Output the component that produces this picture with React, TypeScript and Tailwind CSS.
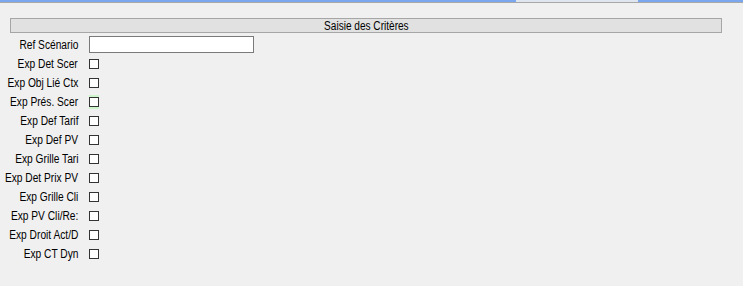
const rows = [
  "Exp Det Scer",
  "Exp Obj Lié Ctx",
  "Exp Prés. Scer",
  "Exp Def Tarif",
  "Exp Def PV",
  "Exp Grille Tari",
  "Exp Det Prix PV",
  "Exp Grille Cli",
  "Exp PV Cli/Re:",
  "Exp Droit Act/D",
  "Exp CT Dyn",
];

function Label({ text }: { text: string }) {
  return (
    <div className="w-[78px] flex justify-end whitespace-nowrap leading-none">
      <span className="inline-block origin-right scale-x-[0.85]">{text}</span>
    </div>
  );
}

export default function App() {
  return (
    <div
      className="w-[743px] h-[286px] bg-[#f0f0f0] text-[12px] text-black overflow-hidden"
      style={{ fontFamily: '"Liberation Sans", Arial, sans-serif' }}
    >
      {/* top window strip */}
      <div className="flex h-[2px]">
        <div className="w-[516px] bg-[#7aa7ee]" />
        <div className="w-[122px] bg-[#dfe6f0]" />
        <div className="flex-1 bg-[#7aa7ee]" />
      </div>
      <div className="h-px bg-[#a8a8a8]" />

      <div className="pt-[15px]">
        {/* section header */}
        <div className="ml-[10px] w-[712px] h-[15px] border border-[#a6a6a6] bg-[#e1e1e1] flex items-center justify-center leading-none">
          <span className="inline-block scale-x-[0.84]">Saisie des Critères</span>
        </div>

        <div className="mt-[3px] flex items-center h-[17px]">
          <Label text="Ref Scénario" />
          <div className="ml-[11px] w-[165px] h-[17px] bg-white border border-[#7a7a7a]" />
        </div>

        <div className="mt-[1px] flex flex-col">
          {rows.map((r, i) => (
            <div key={r} className="flex items-center h-[19px]">
              <Label text={r} />
              <div className="ml-[11px] flex flex-col items-center">
                <div className={`w-[10px] h-[2px] ${i === 2 ? "bg-[#ccf5cc]" : ""}`} />
                <div className="w-[10px] h-[10px] border border-[#333333] bg-white" />
                <div className={`w-[10px] h-[2px] ${i === 2 ? "bg-[#ccf5cc]" : ""}`} />
              </div>
            </div>
          ))}
        </div>
      </div>
    </div>
  );
}
